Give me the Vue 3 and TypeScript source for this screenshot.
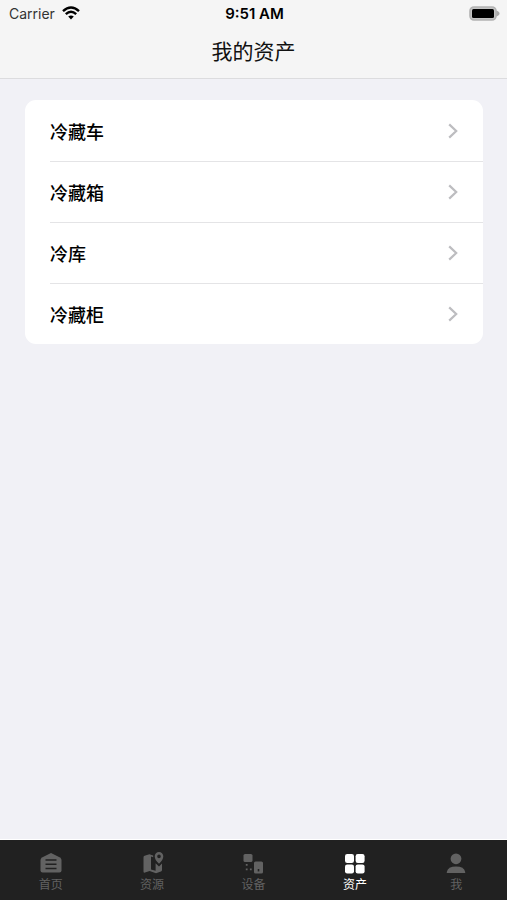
<script setup lang="ts">
import { ref } from 'vue'

type TabId = 'home' | 'resources' | 'devices' | 'assets' | 'me'

interface Tab {
  id: TabId
  label: string
}

const assetTypes: string[] = ['冷藏车', '冷藏箱', '冷库', '冷藏柜']

const tabs: Tab[] = [
  { id: 'home', label: '首页' },
  { id: 'resources', label: '资源' },
  { id: 'devices', label: '设备' },
  { id: 'assets', label: '资产' },
  { id: 'me', label: '我' },
]

const activeTab = ref<TabId>('assets')
</script>

<template>
  <div class="screen">
    <header class="header">
      <div class="status">
        <div class="carrier">
          <span>Carrier</span>
          <svg class="wifi" viewBox="0 0 18 14" aria-hidden="true">
            <path d="M1 5.2Q9-2.2 17 5.2" />
            <path d="M3.8 8.1Q9 3.4 14.2 8.1" />
            <path class="wifi-dot" d="M6.2 10.6Q9 8.3 11.8 10.6L9 13.6Z" />
          </svg>
        </div>
        <span class="time">9:51 AM</span>
        <svg class="battery" viewBox="0 0 31 15" aria-hidden="true">
          <path d="M27 4.5Q30.5 5.5 30.5 7.5T27 10.5Z" fill="#aaa" />
          <rect x="1" y="1" width="26" height="13" rx="4" fill="#c4c4c4" stroke="#b2b2b2" stroke-width="1.6" />
          <rect x="3" y="3" width="22" height="9" rx="1.5" fill="#000" />
        </svg>
      </div>
      <h1 class="title">我的资产</h1>
    </header>

    <main class="content">
      <ul class="list">
        <li v-for="name in assetTypes" :key="name" class="item">
          <button type="button" class="row">
            <span>{{ name }}</span>
            <svg class="chevron" viewBox="0 0 10 16" aria-hidden="true">
              <path d="M1.2 1.4L8.2 8L1.2 14.6" />
            </svg>
          </button>
        </li>
      </ul>
    </main>

    <nav class="tabbar">
      <button
        v-for="tab in tabs"
        :key="tab.id"
        type="button"
        class="tab"
        :class="{ active: tab.id === activeTab }"
        @click="activeTab = tab.id"
      >
        <svg class="tab-icon" viewBox="0 0 24 24" aria-hidden="true">
          <template v-if="tab.id === 'home'">
            <path d="M12 2L20.5 6.2Q22.5 7.2 22.5 9V19.5Q22.5 21.5 20.5 21.5H3.5Q1.5 21.5 1.5 19.5V9Q1.5 7.2 3.5 6.2Z" />
            <path class="cut" d="M6.5 9H17.5M6.5 13.2H17.5M6.5 17.4H17.5" stroke-width="1.5" />
          </template>
          <template v-else-if="tab.id === 'resources'">
            <path
              d="M3.5 6.4Q3.5 5.2 4.6 4.8L9.4 3.2L13.2 4.4V6.2L11 5.6V18.4L15.6 19.8V12.2L19 15.4L22 12.6V19Q22 20.2 20.9 20.6L16 22.2L9.6 20L5 21.6Q3.5 22 3.5 20.4Z"
            />
            <path
              fill-rule="evenodd"
              d="M19 1A4.3 4.3 0 0 1 23.3 5.3Q23.3 8.8 19 12.8Q14.7 8.8 14.7 5.3A4.3 4.3 0 0 1 19 1ZM19 3.6A1.8 1.8 0 1 0 19 7.2A1.8 1.8 0 0 0 19 3.6Z"
            />
          </template>
          <template v-else-if="tab.id === 'devices'">
            <rect x="2.5" y="3" width="9" height="8" rx="1.6" />
            <rect x="13" y="10.5" width="9" height="12" rx="1.6" />
            <rect class="hole" x="16.7" y="18" width="1.6" height="2.4" />
            <path d="M4.8 13H6.6V14.8H4.8ZM4.8 17.4H6.6V19.2H4.8ZM8.9 17.4H10.7V19.2H8.9Z" />
          </template>
          <template v-else-if="tab.id === 'assets'">
            <rect x="2" y="3" width="9" height="9" rx="2.2" />
            <rect x="12.6" y="3" width="9" height="9" rx="2.2" />
            <rect x="2" y="13.4" width="9" height="9" rx="2.2" />
            <rect x="12.6" y="13.4" width="9" height="9" rx="2.2" />
          </template>
          <template v-else>
            <circle cx="12" cy="7.8" r="5.4" />
            <path d="M2.8 22V21Q4 15.6 12 15.6T21.2 21V22Z" />
          </template>
        </svg>
        <span>{{ tab.label }}</span>
      </button>
    </nav>
  </div>
</template>

<style>
body {
  margin: 0;
  background: #f1f1f6;
}
</style>

<style scoped>
.screen {
  display: flex;
  flex-direction: column;
  min-height: 100vh;
  background: #f1f1f6;
  color: #000;
  font-family: Inter, "Noto Sans CJK SC", sans-serif;
}

button {
  margin: 0;
  padding: 0;
  border: 0;
  background: none;
  color: inherit;
  font: inherit;
  cursor: pointer;
}

.header {
  background: #f5f5f5;
  border-bottom: 1px solid #dcdcde;
}

.status {
  display: grid;
  grid-template-columns: 1fr auto 1fr;
  align-items: center;
  height: 26px;
  padding: 0 7px 0 9px;
  font-size: 14px;
}

.carrier {
  display: flex;
  align-items: center;
  gap: 7px;
  color: #333;
}

.wifi {
  width: 18px;
  height: 14px;
  fill: none;
  stroke: #000;
  stroke-width: 2.4;
}

.wifi .wifi-dot {
  fill: #000;
  stroke: none;
}

.time {
  font-size: 15px;
  font-weight: 600;
}

.battery {
  width: 31px;
  height: 15px;
  justify-self: end;
}

.title {
  margin: 0;
  height: 52px;
  font-size: 21px;
  line-height: 52px;
  font-weight: 400;
  text-align: center;
  color: #111;
}

.content {
  flex: 1;
  padding: 21px 24px 24px 25px;
}

.list {
  margin: 0;
  padding: 0 0 0 25px;
  list-style: none;
  background: #fff;
  border-radius: 11px;
}

.item + .item {
  border-top: 1px solid #e4e4e6;
}

.row {
  display: flex;
  align-items: center;
  justify-content: space-between;
  width: 100%;
  height: 60px;
  padding-right: 25px;
  font-size: 18px;
  font-weight: 500;
}

.item:first-child .row {
  height: 61px;
}

.chevron {
  width: 10px;
  height: 16px;
  fill: none;
  stroke: #bdbdc0;
  stroke-width: 2.2;
}

.tabbar {
  display: grid;
  grid-template-columns: repeat(5, 1fr);
  height: 60px;
  border-top: 1px solid #fff;
  background: #212121;
}

.tab {
  display: flex;
  flex-direction: column;
  align-items: center;
  padding-top: 11px;
  font-size: 12px;
  line-height: 20px;
  color: #626262;
}

.tab.active {
  color: #fff;
}

.tab-icon {
  width: 24px;
  height: 24px;
  fill: currentColor;
}

.tab-icon .cut {
  fill: none;
  stroke: #212121;
}

.tab-icon .hole {
  fill: #212121;
}
</style>
